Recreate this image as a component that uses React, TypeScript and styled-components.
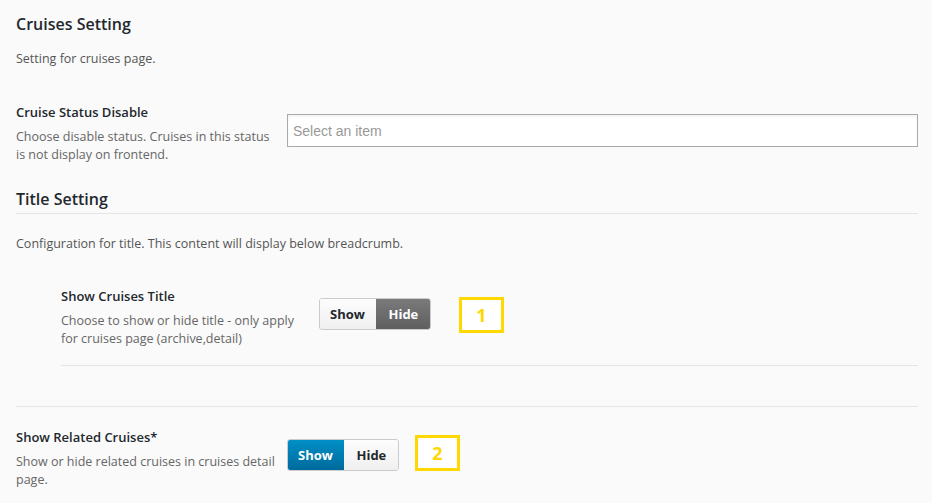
import styled, { createGlobalStyle } from 'styled-components';

const GlobalStyle = createGlobalStyle`
  html, body {
    margin: 0;
    padding: 0;
    background: #fafafa;
  }

  body {
    font-family: "Open Sans", "Noto Sans", sans-serif;
    color: #444;
  }
`;

const App = () => {
  return (
    <Page>
      <GlobalStyle />
      <SectionTitle>Cruises Setting</SectionTitle>
      <Intro>Setting for cruises page.</Intro>

      <FieldRow $gap={35} $labelWidth={271}>
        <Label>
          <FieldName>Cruise Status Disable</FieldName>
          <FieldDesc>Choose disable status. Cruises in this status is not display on frontend.</FieldDesc>
        </Label>
        <SelectBox>
          <Placeholder>Select an item</Placeholder>
        </SelectBox>
      </FieldRow>

      <SectionTitle $underline>Title Setting</SectionTitle>
      <Intro $top={21}>Configuration for title. This content will display below breadcrumb.</Intro>

      <SubGroup>
        <FieldRow $gap={0} $labelWidth={258}>
          <Label>
            <FieldName>Show Cruises Title</FieldName>
            <FieldDesc>Choose to show or hide title - only apply for cruises page (archive,detail)</FieldDesc>
          </Label>
          <Toggle>
            <ToggleButton>Show</ToggleButton>
            <ToggleButton $active="dark">Hide</ToggleButton>
          </Toggle>
          <Marker $left={28} $top={10}>1</Marker>
        </FieldRow>
      </SubGroup>

      <Divider />

      <FieldRow $gap={21} $labelWidth={271}>
        <Label>
          <FieldName>Show Related Cruises*</FieldName>
          <FieldDesc>Show or hide related cruises in cruises detail page.</FieldDesc>
        </Label>
        <Toggle>
          <ToggleButton $active="blue">Show</ToggleButton>
          <ToggleButton>Hide</ToggleButton>
        </Toggle>
        <Marker $left={16} $top={7}>2</Marker>
      </FieldRow>
    </Page>
  );
};

const Page = styled.div`
  padding: 14px 14px 0 16px;
  min-height: 100vh;
  box-sizing: border-box;
`;

const SectionTitle = styled.h2<{ $underline?: boolean }>`
  margin: ${(p) => (p.$underline ? '26px' : '0')} 0 0;
  font-size: 16px;
  line-height: 20px;
  font-weight: 600;
  color: #23282d;
  padding-bottom: ${(p) => (p.$underline ? '4px' : '0')};
  border-bottom: ${(p) => (p.$underline ? '1px solid #e5e5e5' : 'none')};
`;

const Intro = styled.p<{ $top?: number }>`
  margin: ${(p) => p.$top ?? 16}px 0 0;
  font-size: 12.5px;
  line-height: 18px;
  color: #555;
`;

const FieldRow = styled.div<{ $gap: number; $labelWidth: number }>`
  display: grid;
  grid-template-columns: ${(p) => p.$labelWidth}px auto auto 1fr;
  align-items: start;
  margin-top: ${(p) => p.$gap}px;

  & > :nth-child(2):last-child {
    grid-column: 2 / -1;
  }
`;

const Label = styled.div`
  padding-right: 10px;
`;

const FieldName = styled.div`
  font-size: 13px;
  line-height: 18px;
  font-weight: 600;
  color: #23282d;
`;

const FieldDesc = styled.div`
  margin-top: 7px;
  font-size: 12.5px;
  line-height: 17.5px;
  color: #666;
`;

const SelectBox = styled.div`
  margin-top: 11px;
  height: 33px;
  box-sizing: border-box;
  border: 1px solid #aaa;
  background: #fff;
  box-shadow: inset 0 2px 3px rgba(0, 0, 0, 0.05);
  display: flex;
  align-items: center;
  padding: 0 5px;
`;

const Placeholder = styled.span`
  font-family: "Liberation Sans", Arial, sans-serif;
  font-size: 14px;
  color: #999;
`;

const SubGroup = styled.div`
  margin: 34px 0 0 45px;
  padding-bottom: 18px;
  border-bottom: 1px solid #e5e5e5;
`;

const Divider = styled.hr`
  margin: 40px 0 0;
  border: 0;
  border-top: 1px solid #e5e5e5;
`;

const Toggle = styled.div`
  margin-top: 11px;
  display: flex;
  height: 32px;
  border-radius: 3px;
  overflow: hidden;
  border: 1px solid #ccc;
  box-sizing: border-box;
`;

const ToggleButton = styled.div<{ $active?: 'dark' | 'blue' }>`
  display: flex;
  align-items: center;
  justify-content: center;
  padding: 0 11px;
  min-width: 33px;
  font-size: 13px;
  font-weight: 700;
  color: ${(p) => (p.$active ? '#fff' : '#23282d')};
  background: ${(p) =>
    p.$active === 'dark'
      ? 'linear-gradient(#7b7b7b, #5e5e5e)'
      : p.$active === 'blue'
        ? 'linear-gradient(#0090c8, #00699b)'
        : 'linear-gradient(#fdfdfd, #efefef)'};
  margin: -1px 0;
  &:first-child {
    margin-left: -1px;
  }
  &:last-child {
    margin-right: -1px;
  }
`;

const Marker = styled.div<{ $left: number; $top: number }>`
  margin: ${(p) => p.$top}px 0 0 ${(p) => p.$left}px;
  width: 45px;
  height: 36px;
  box-sizing: border-box;
  border: 3px solid #ffd800;
  background: #fff;
  display: flex;
  align-items: center;
  justify-content: center;
  font-size: 18px;
  font-weight: 700;
  color: #ffd800;
`;

export default App;
